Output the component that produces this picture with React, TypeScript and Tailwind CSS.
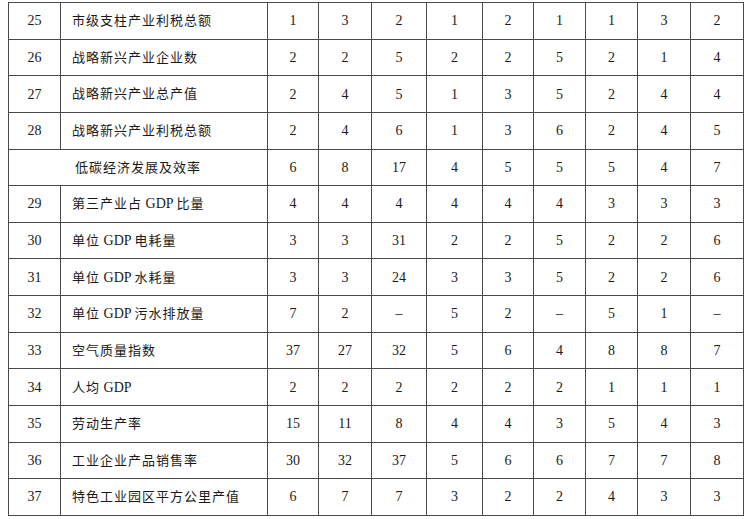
import React from "react";

type Row = { no?: string; name: string; vals: string[] };

const rows: Row[] = [
  { no: "25", name: "市级支柱产业利税总额", vals: ["1", "3", "2", "1", "2", "1", "1", "3", "2"] },
  { no: "26", name: "战略新兴产业企业数", vals: ["2", "2", "5", "2", "2", "5", "2", "1", "4"] },
  { no: "27", name: "战略新兴产业总产值", vals: ["2", "4", "5", "1", "3", "5", "2", "4", "4"] },
  { no: "28", name: "战略新兴产业利税总额", vals: ["2", "4", "6", "1", "3", "6", "2", "4", "5"] },
  { name: "低碳经济发展及效率", vals: ["6", "8", "17", "4", "5", "5", "5", "4", "7"] },
  { no: "29", name: "第三产业占 GDP 比量", vals: ["4", "4", "4", "4", "4", "4", "3", "3", "3"] },
  { no: "30", name: "单位 GDP 电耗量", vals: ["3", "3", "31", "2", "2", "5", "2", "2", "6"] },
  { no: "31", name: "单位 GDP 水耗量", vals: ["3", "3", "24", "3", "3", "5", "2", "2", "6"] },
  { no: "32", name: "单位 GDP 污水排放量", vals: ["7", "2", "–", "5", "2", "–", "5", "1", "–"] },
  { no: "33", name: "空气质量指数", vals: ["37", "27", "32", "5", "6", "4", "8", "8", "7"] },
  { no: "34", name: "人均 GDP", vals: ["2", "2", "2", "2", "2", "2", "1", "1", "1"] },
  { no: "35", name: "劳动生产率", vals: ["15", "11", "8", "4", "4", "3", "5", "4", "3"] },
  { no: "36", name: "工业企业产品销售率", vals: ["30", "32", "37", "5", "6", "6", "7", "7", "8"] },
  { no: "37", name: "特色工业园区平方公里产值", vals: ["6", "7", "7", "3", "2", "2", "4", "3", "3"] },
];

const valueWidths = [51, 53, 55, 56, 51, 52, 52, 53, 53];

// latin runs like "GDP" keep normal spacing, only the hanzi get tracking
function Name({ text }: { text: string }) {
  const parts = text.split(/( ?GDP ?)/).filter(Boolean);
  return (
    <>
      {parts.map((p, i) =>
        /GDP/.test(p) ? (
          <span key={i} className="tracking-normal text-[14px]">
            {p}
          </span>
        ) : (
          <span key={i}>{p}</span>
        )
      )}
    </>
  );
}

export default function App() {
  return (
    <div className="w-[750px] h-[519px] bg-white pt-[2px] pl-[8px] overflow-hidden">
      <table
        className="table-fixed border-collapse w-[735px] text-[#1a1a1a]"
        style={{ fontFamily: '"Liberation Serif", "Noto Sans CJK SC", serif' }}
      >
        <colgroup>
          <col className="w-[52px]" />
          <col className="w-[207px]" />
          {valueWidths.map((w, i) => (
            <col key={i} style={{ width: w }} />
          ))}
        </colgroup>
        <tbody>
          {rows.map((r, i) => (
            <tr key={i} className="h-[36.64px]">
              {r.no ? (
                <>
                  <td className="border border-[#4a4a4a] text-center text-[14px] p-0">{r.no}</td>
                  <td className="border border-[#4a4a4a] text-left text-[13px] tracking-[1px] pl-[11px] p-0">
                    <Name text={r.name} />
                  </td>
                </>
              ) : (
                <td
                  colSpan={2}
                  className="border border-[#4a4a4a] text-center text-[13px] tracking-[1px] p-0"
                >
                  {r.name}
                </td>
              )}
              {r.vals.map((v, j) => (
                <td key={j} className="border border-[#4a4a4a] text-center text-[14px] p-0">
                  {v}
                </td>
              ))}
            </tr>
          ))}
        </tbody>
      </table>
    </div>
  );
}
